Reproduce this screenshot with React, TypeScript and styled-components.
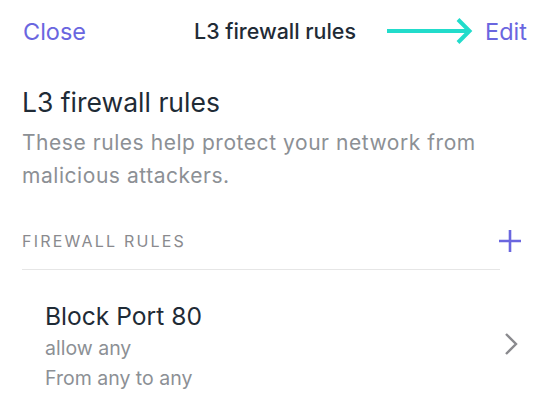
import React from 'react'
import styled, { createGlobalStyle } from 'styled-components'

const GlobalStyle = createGlobalStyle`
    html, body {
        margin: 0;
        padding: 0;
        background: #ffffff;
        font-family: Inter, "Noto Sans", sans-serif;
    }
`

const Page = styled.div`
    width: 550px;
    height: 403px;
    overflow: hidden;
    background: #ffffff;
`

const NavBar = styled.header`
    display: grid;
    grid-template-columns: 1fr auto 1fr;
    align-items: center;
    height: 62px;
    padding: 0 23px;
`

const NavButton = styled.button<{ $align: 'left' | 'right' }>`
    justify-self: ${p => (p.$align === 'left' ? 'start' : 'end')};
    border: none;
    background: none;
    padding: 0;
    font-family: inherit;
    font-size: 23.5px;
    color: #6a66df;
    display: flex;
    align-items: center;
`

const NavTitle = styled.h1`
    margin: 0;
    font-size: 21.4px;
    font-weight: 500;
    color: #1f2b36;
`

const Intro = styled.section`
    padding: 24px 22px 0;
`

const Heading = styled.h2`
    margin: 0 0 8px;
    font-size: 26.5px;
    font-weight: 400;
    color: #1f2b36;
`

const Description = styled.p`
    margin: 0;
    font-size: 21px;
    letter-spacing: 0.55px;
    line-height: 33px;
    color: #8c9095;
`

const SectionHeader = styled.div`
    display: flex;
    align-items: center;
    justify-content: space-between;
    margin: 38px 29px 0 22px;
    padding-bottom: 17px;
`

const SectionLabel = styled.h3`
    margin: 0;
    font-size: 16px;
    font-weight: 400;
    letter-spacing: 2.2px;
    color: #8a8a8e;
`

const Divider = styled.hr`
    margin: 0 50px 0 22px;
    border: none;
    border-top: 1px solid #e6e6e6;
`

const RuleRow = styled.div`
    display: flex;
    align-items: center;
    justify-content: space-between;
    padding: 30px 32px 0 45px;
`

const RuleText = styled.div`
    display: flex;
    flex-direction: column;
`

const RuleName = styled.div`
    font-size: 24.6px;
    color: #1f2b36;
    line-height: 32px;
    margin-bottom: 1px;
`

const RuleDetail = styled.div`
    font-size: 19.5px;
    line-height: 30px;
    color: #8c9095;
`

const ChevronWrap = styled.span`
    display: flex;
    margin-bottom: 6px;
`

function Arrow() {
    return (
        <svg width="86" height="28" viewBox="0 0 86 28" style={{ marginRight: 12 }}>
            <path d="M0 14 H82" stroke="#22dccb" strokeWidth="4" fill="none" />
            <path d="M71 2.5 L82.5 14 L71 25.5" stroke="#22dccb" strokeWidth="4" fill="none" />
        </svg>
    )
}

function Plus() {
    return (
        <svg width="22" height="22" viewBox="0 0 22 22">
            <path d="M11 0 V22 M0 11 H22" stroke="#6a66df" strokeWidth="2.6" />
        </svg>
    )
}

function Chevron() {
    return (
        <ChevronWrap>
            <svg width="14" height="24" viewBox="0 0 14 24">
                <path d="M2 2 L12 12 L2 22" stroke="#8a8a8e" strokeWidth="2.4" fill="none" />
            </svg>
        </ChevronWrap>
    )
}

export default function App() {
    return (
        <Page>
            <GlobalStyle />
            <NavBar>
                <NavButton $align="left">Close</NavButton>
                <NavTitle>L3 firewall rules</NavTitle>
                <NavButton $align="right">
                    <Arrow />
                    Edit
                </NavButton>
            </NavBar>
            <Intro>
                <Heading>L3 firewall rules</Heading>
                <Description>
                    These rules help protect your network from malicious attackers.
                </Description>
            </Intro>
            <SectionHeader>
                <SectionLabel>FIREWALL RULES</SectionLabel>
                <Plus />
            </SectionHeader>
            <Divider />
            <RuleRow>
                <RuleText>
                    <RuleName>Block Port 80</RuleName>
                    <RuleDetail>allow any</RuleDetail>
                    <RuleDetail>From any to any</RuleDetail>
                </RuleText>
                <Chevron />
            </RuleRow>
        </Page>
    )
}
